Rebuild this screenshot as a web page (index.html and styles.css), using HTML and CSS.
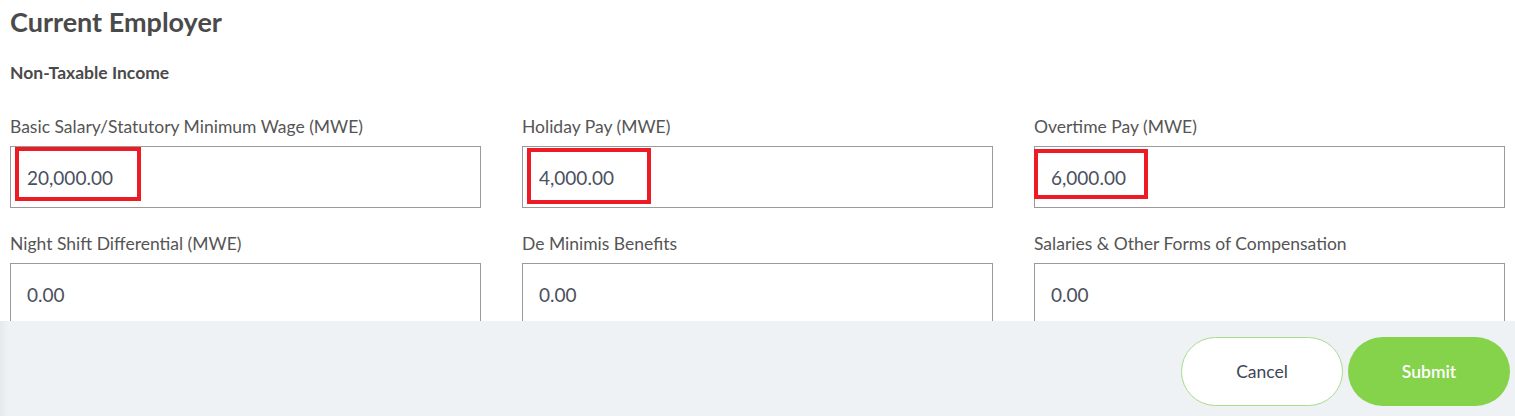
FILE: index.html
```html
<!DOCTYPE html>
<html lang="en">
<head>
<meta charset="utf-8">
<title>Current Employer</title>
<link rel="stylesheet" href="styles.css">
</head>
<body>
<div class="modal">
  <div class="content">
    <h2 class="title">Current Employer</h2>
    <h3 class="subtitle">Non-Taxable Income</h3>
    <div class="grid">
      <div class="field">
        <label class="label">Basic Salary/Statutory Minimum Wage (MWE)</label>
        <div class="input-wrap">
          <div class="input">20,000.00</div>
          <span class="mark mark-1"></span>
        </div>
      </div>
      <div class="field">
        <label class="label">Holiday Pay (MWE)</label>
        <div class="input-wrap">
          <div class="input">4,000.00</div>
          <span class="mark mark-2"></span>
        </div>
      </div>
      <div class="field">
        <label class="label">Overtime Pay (MWE)</label>
        <div class="input-wrap">
          <div class="input">6,000.00</div>
          <span class="mark mark-3"></span>
        </div>
      </div>
      <div class="field">
        <label class="label">Night Shift Differential (MWE)</label>
        <div class="input-wrap"><div class="input">0.00</div></div>
      </div>
      <div class="field">
        <label class="label">De Minimis Benefits</label>
        <div class="input-wrap"><div class="input">0.00</div></div>
      </div>
      <div class="field">
        <label class="label">Salaries &amp; Other Forms of Compensation</label>
        <div class="input-wrap"><div class="input">0.00</div></div>
      </div>
    </div>
  </div>
  <div class="footer">
    <button class="btn btn-cancel">Cancel</button>
    <button class="btn btn-submit">Submit</button>
  </div>
</div>
</body>
</html>
```
FILE: styles.css
```css
* { box-sizing: border-box; }
html, body { margin: 0; padding: 0; background: #fff; }
body {
  font-family: Lato, "Liberation Sans", sans-serif;
  color: #4a4a4a;
  width: 1515px;
  height: 416px;
  overflow: hidden;
}
.modal { display: flex; flex-direction: column; height: 416px; }
.content {
  height: 321px;
  overflow: hidden;
  padding: 0 10px;
}
.title {
  margin: 0;
  padding-top: 6px;
  font-size: 27px;
  line-height: 32px;
  font-weight: 700;
  color: #4a4a4a;
}
.subtitle {
  margin: 23px 0 0;
  font-size: 17.5px;
  line-height: 24px;
  font-weight: 700;
  color: #4a4a4a;
}
.grid {
  display: grid;
  grid-template-columns: repeat(3, 471px);
  column-gap: 41px;
  row-gap: 24px;
  margin-top: 30px;
}
.field { display: flex; flex-direction: column; }
.label {
  font-size: 17.5px;
  line-height: 24px;
  color: #555;
  margin-bottom: 7px;
}
.input-wrap { position: relative; }
.input {
  height: 62px;
  border: 1px solid #9a9a9a;
  padding: 0 16px;
  display: flex;
  align-items: center;
  font-size: 19px;
  color: #4b5060;
  background: #fff;
}
.mark {
  position: absolute;
  border: 4px solid #ed1c24;
}
.mark-1 { left: 5px; top: 1px; width: 126px; height: 54px; }
.mark-2 { left: 5px; top: 2px; width: 124px; height: 56px; }
.mark-3 { left: 0; top: 3px; width: 114px; height: 50px; }
.footer {
  height: 95px;
  background: linear-gradient(to right, #e6e9ec 0, #eff2f5 8px, #eff2f5 100%);
  display: flex;
  justify-content: flex-end;
  align-items: flex-start;
  gap: 5px;
  padding: 16px 5px 0 0;
}
.btn {
  width: 162px;
  height: 69px;
  border-radius: 35px;
  font-family: Lato, "Liberation Sans", sans-serif;
  font-size: 17.5px;
  cursor: pointer;
}
.btn-cancel {
  background: #fff;
  border: 1px solid #a9dc8b;
  color: #3d4656;
}
.btn-submit {
  background: #84d34b;
  border: none;
  color: #fff;
  font-weight: 600;
}
```
